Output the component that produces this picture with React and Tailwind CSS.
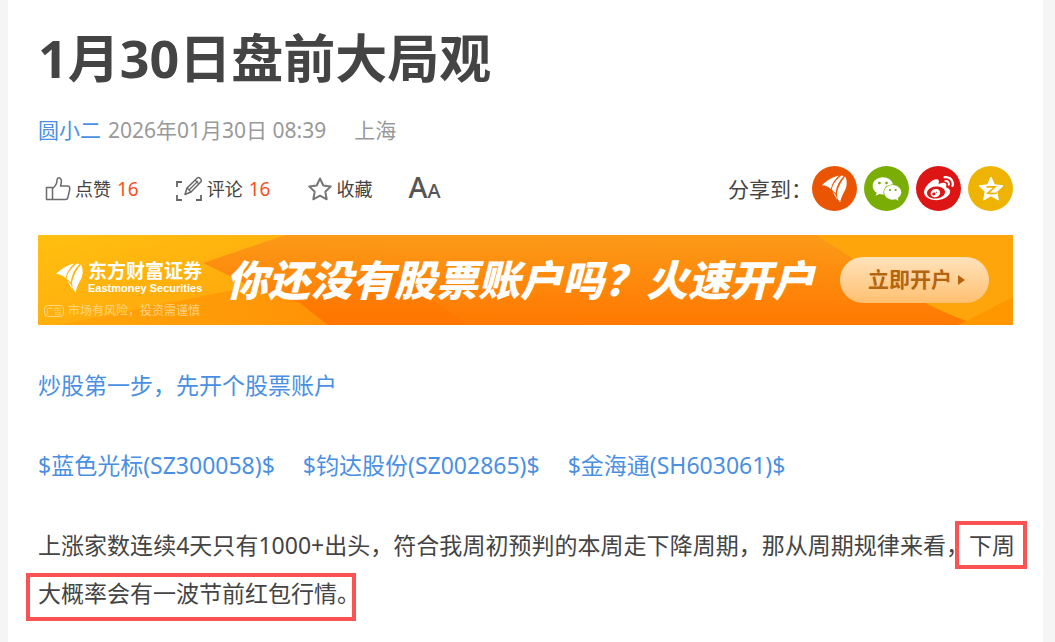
import React from "react";
import { FaWeibo, FaWeixin } from "react-icons/fa";

function EastmoneyMark({ className }) {
  return (
    <svg viewBox="0 0 28 30" className={className} fill="currentColor" aria-hidden="true">
      <path d="M0 11C5 6 11 2 18.500 0.500 14 4 11 8.500 9.500 15 7 12.500 4 11.200 0 11Z" />
      <path d="M21 0.500C15 5 11.800 9.500 10.500 15.500L14.600 19.500C15.500 12 18.500 6 23.500 1Z" />
      <path d="M25 1.500C20.500 6.500 17.500 12.500 16 19.500L16.500 25 19.500 29.500C20.500 24.500 22.500 20.500 24.500 17 27 12.500 27.500 6.500 25 1.500Z" />
      <path d="M11 17.500L15 21.500 16.500 27.500C15 24 13 20.500 11 17.500Z" />
    </svg>
  );
}

function ThumbIcon() {
  return (
    <svg viewBox="0 0 26 26" className="size-[26px]" fill="none" stroke="#6b6b6b" strokeWidth="1.5" strokeLinejoin="round" aria-hidden="true">
      <path d="M1.500 11.500H7.500V23.500H1.500Z" />
      <path d="M7.500 12.500C10.500 10 12 7.500 12 4.500 12 2.500 13 1.500 14.500 2 17 3 16.500 7 15.500 10H22.500C24.500 10 25 11.500 24.700 13.500L22.700 22C22.400 23.200 21.700 23.500 20.500 23.500H7.500" />
    </svg>
  );
}

function CommentIcon() {
  return (
    <svg viewBox="0 0 28 26" className="h-[26px] w-7" fill="none" stroke="#666" aria-hidden="true">
      <path strokeWidth="1.800" d="M7 6H2V11M2 19V24H7M21 24H26V19" />
      <path strokeWidth="1.500" strokeLinejoin="round" d="M10 18.500L12 12 22.500 1.800C24 0.800 27.200 3.500 26.200 5.500L16 16Z" />
      <path strokeWidth="1.200" d="M12 12L16 16M20 4L24 8M14 14L23 5" />
    </svg>
  );
}

function StarIcon() {
  return (
    <svg viewBox="0 0 26 26" className="size-[26px]" fill="none" stroke="#777" strokeWidth="2" strokeLinejoin="round" aria-hidden="true">
      <path d="M13 2.500L16.300 9.500 23.800 10.400 18.300 15.700 19.700 23.300 13 19.700 6.300 23.300 7.700 15.700 2.200 10.400 9.700 9.500Z" />
    </svg>
  );
}

function QzoneIcon() {
  return (
    <svg viewBox="0 0 28 28" className="size-7" aria-hidden="true">
      <path fill="#fff" stroke="#fff" strokeLinejoin="round" d="M14 2L17.500 9.800 26 10.800 19.800 16.600 21.400 25 14 20.800 6.600 25 8.200 16.600 2 10.800 10.500 9.800Z" />
      <path fill="none" stroke="#f0b400" strokeWidth="1.700" d="M9.500 11.800H18L10.800 18.200C14 18.800 17 18.700 20 18" />
    </svg>
  );
}

const shares = [
  { label: "东方财富", bg: "bg-[#ea5504]", icon: <EastmoneyMark className="h-7 w-[26px]" /> },
  { label: "微信", bg: "bg-[#7aae07]", icon: <FaWeixin className="size-[30px]" /> },
  { label: "微博", bg: "bg-[#dd1515]", icon: <FaWeibo className="size-[30px]" /> },
  { label: "QQ空间", bg: "bg-[#efb403]", icon: <QzoneIcon /> },
];

const stocks = ["$蓝色光标(SZ300058)$", "$钧达股份(SZ002865)$", "$金海通(SH603061)$"];

function Banner() {
  return (
    <a href="#open" className="relative mt-6 flex h-[90px] items-center overflow-hidden bg-[#ff8a0c] text-white">
      <svg viewBox="0 0 975 90" preserveAspectRatio="none" className="absolute inset-0 h-full w-full" aria-hidden="true">
        <defs>
          <linearGradient id="left" x1="0" y1="0" x2="1" y2="1">
            <stop offset="0" stopColor="#ffc010" />
            <stop offset="1" stopColor="#ffa00a" />
          </linearGradient>
          <linearGradient id="mid" x1="0.500" y1="0" x2="0.450" y2="1">
            <stop offset="0" stopColor="#fc9a18" />
            <stop offset="1" stopColor="#ff7800" />
          </linearGradient>
          <linearGradient id="low" x1="0" y1="0" x2="1" y2="0">
            <stop offset="0" stopColor="#ffa60a" />
            <stop offset="1" stopColor="#ff9206" />
          </linearGradient>
        </defs>
        <rect width="975" height="90" fill="url(#mid)" />
        <path d="M0 0H248L165 28 200 45 290 90H0Z" fill="url(#left)" />
        <path d="M20 90L210 52 262 68 290 90Z" fill="url(#low)" />
        <path d="M262 68L345 30 430 90H290Z" fill="#ff7400" opacity="0.400" />
        <path d="M778 0H975V90H940C880 70 850 45 778 0Z" fill="#ffa50c" />
        <path d="M975 62L920 90H975Z" fill="#ff9800" />
      </svg>
      <div className="relative w-[188px] shrink-0 pt-5 pl-1.5">
        <div className="flex items-center gap-1 pl-3">
          <EastmoneyMark className="h-[30px] w-7" />
          <div className="whitespace-nowrap">
            <div className="text-[19px] leading-5 font-bold">东方财富证券</div>
            <div className="font-['Liberation_Sans',sans-serif] text-[11px] leading-[14px] font-bold">Eastmoney Securities</div>
          </div>
        </div>
        <div className="mt-2 flex items-center gap-1 whitespace-nowrap text-[#ffdf9a] opacity-80">
          <span className="rounded-sm border border-[#ffdf9a] px-px text-[8px] leading-[10px]">广告</span>
          <span className="text-[12px] leading-4">市场有风险，投资需谨慎</span>
        </div>
      </div>
      <strong className="relative text-[42px] leading-[60px] font-black whitespace-nowrap italic">你还没有股票账户吗？火速开户</strong>
      <span className="relative mr-6 ml-auto flex h-[46px] w-[149px] shrink-0 items-center justify-center gap-1.5 rounded-full bg-linear-to-b from-[#ffe2ba] to-[#ffc070] pl-1 text-[21px] font-bold text-[#b5640f]">
        立即开户
        <svg viewBox="0 0 7 10" className="h-2.5 w-[7px]" fill="currentColor" aria-hidden="true">
          <path d="M0 0L7 5 0 10Z" />
        </svg>
      </span>
    </a>
  );
}

export default function App() {
  return (
    <div className="min-h-screen bg-[#f5f5f5] pr-3 pl-2 font-['Noto_Sans','Noto_Sans_CJK_SC',sans-serif] text-[#444]">
      <article className="min-h-screen bg-white px-[30px] pt-[26px]">
        <h1 className="text-[52px] leading-16 font-bold">1月30日盘前大局观</h1>
        <div className="mt-[25px] flex items-center text-[21px] leading-[30px] text-[#999]">
          <a href="#author" className="mr-[7px] text-[#4a90e2]">圆小二</a>
          <time dateTime="2026-01-30T08:39">2026年01月30日 08:39</time>
          <span className="ml-7">上海</span>
        </div>
        <div className="mt-[21px] flex items-center justify-between">
          <div className="flex items-center pl-[7px] text-[18px] leading-6">
            <button type="button" className="flex items-center">
              <ThumbIcon />
              <span className="mr-1.5 ml-1">点赞</span>
              <span className="text-[19px] text-[#f4511e]">16</span>
            </button>
            <button type="button" className="ml-9 flex items-center">
              <CommentIcon />
              <span className="mr-1.5 ml-1">评论</span>
              <span className="text-[19px] text-[#f4511e]">16</span>
            </button>
            <button type="button" className="ml-9 flex items-center">
              <StarIcon />
              <span className="ml-1">收藏</span>
            </button>
            <button type="button" aria-label="字号" className="ml-9 flex items-baseline text-[#555]">
              <span className="text-[29px] font-medium">A</span>
              <span className="text-[20px] font-medium">A</span>
            </button>
          </div>
          <div className="flex items-center gap-[7px]">
            <span className="-mr-[7px] text-[21px] leading-[30px]">分享到：</span>
            {shares.map((s) => (
              <a key={s.label} href="#share" aria-label={s.label} className={`flex size-[45px] items-center justify-center rounded-full text-white ${s.bg}`}>
                {s.icon}
              </a>
            ))}
          </div>
        </div>
        <Banner />
        <div className="mt-9 space-y-8 text-[23px] leading-[48px]">
          <p>
            <a href="#open" className="text-[#4a90e2]">炒股第一步，先开个股票账户</a>
          </p>
          <p className="flex flex-wrap gap-x-7 text-[#4a90e2]">
            {stocks.map((s) => (
              <a key={s} href="#stock">{s}</a>
            ))}
          </p>
          <p className="-mr-0.5 text-justify">
            上涨家数连续4天只有1000+出头，符合我周初预判的本周走下降周期，那从周期规律来看，
            <span className="relative">
              下周
              <span className="absolute -top-2 -right-3 -bottom-2 -left-3.5 border-4 border-[#fb5353]" />
            </span>
            <span className="relative">
              大概率会有一波节前红包行情。
              <span className="absolute -top-1 right-1 -bottom-3 -left-3 border-4 border-[#fb5353]" />
            </span>
          </p>
        </div>
      </article>
    </div>
  );
}
